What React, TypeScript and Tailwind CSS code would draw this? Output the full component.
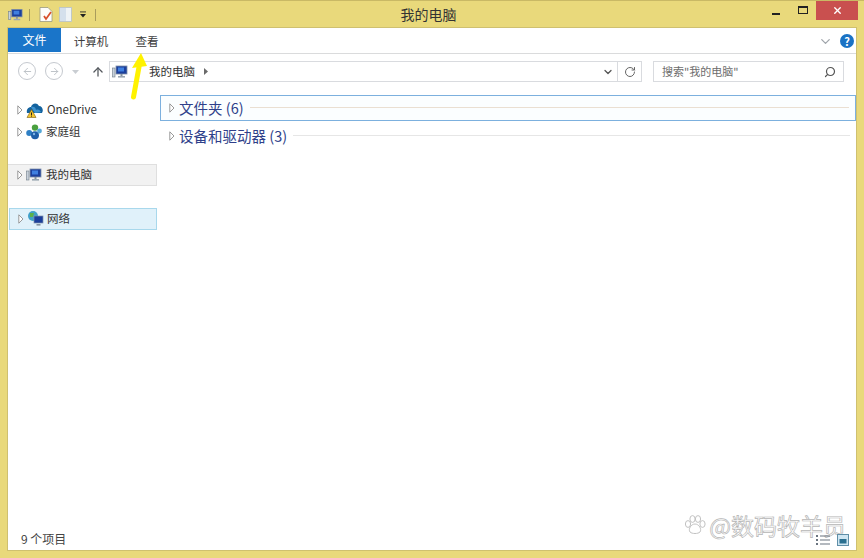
import { ChevronDown, Search, RotateCw, ArrowUp, ArrowLeft, ArrowRight, X } from 'lucide-react';

function PcIcon({ className }: { className?: string }) {
  return (
    <svg viewBox="0 0 16 14" className={className}>
      <rect x="4" y="1" width="11" height="8" fill="#1b3f9c" stroke="#7f8fa8" strokeWidth="0.8" />
      <rect x="6" y="2.5" width="6" height="4" fill="#3f7fe0" />
      <rect x="0.5" y="3" width="2.5" height="9" fill="#c9d2dc" stroke="#6f7c88" strokeWidth="0.6" />
      <rect x="6" y="11" width="7" height="1.6" fill="#9aa7b2" />
      <rect x="8.5" y="9" width="2" height="2" fill="#8492a0" />
    </svg>
  );
}

function Caret() {
  return (
    <svg viewBox="0 0 6 10" className="w-[6px] h-[10px] shrink-0">
      <path d="M0.8 0.8 L5 5 L0.8 9.2 Z" fill="white" stroke="#8e8e8e" strokeWidth="0.9" />
    </svg>
  );
}

function OneDriveIcon() {
  return (
    <svg viewBox="0 0 17 16" className="w-[17px] h-[16px] shrink-0">
      <path d="M1 11 C0 7 3 5 5 5 C6 1 11 0 13 4 C16 4 18 8 16 11 Z" fill="#14639f" />
      <path d="M5 5 C7 4 10 5 10 8 C12 7 14 8 15 10 L9 11 Z" fill="#3f93cf" />
      <path d="M1 15.5 L5.5 7.5 L10 15.5 Z" fill="#f4c52e" stroke="#7a5c10" strokeWidth="0.6" />
      <rect x="5" y="10.5" width="1" height="2.6" fill="#222" />
      <rect x="5" y="13.6" width="1" height="1" fill="#222" />
    </svg>
  );
}

function HomeGroupIcon() {
  return (
    <svg viewBox="0 0 16 16" className="w-[16px] h-[16px] shrink-0">
      <circle cx="3.2" cy="9" r="3" fill="#2f7fc4" />
      <circle cx="9" cy="3.6" r="3.2" fill="#4aa03f" />
      <circle cx="9" cy="11.2" r="4" fill="#1f5fa8" />
      <circle cx="13.5" cy="7" r="2.4" fill="#55a8d8" />
      <circle cx="8" cy="10" r="1.2" fill="#7fb4e4" />
    </svg>
  );
}

function NetworkIcon() {
  return (
    <svg viewBox="0 0 17 16" className="w-[17px] h-[16px] shrink-0">
      <circle cx="6" cy="5" r="5" fill="#3fa0c8" />
      <path d="M3 2 L7 2 L6 6 L3 6 Z" fill="#5bb04a" />
      <rect x="7" y="5" width="9" height="7" fill="#1b3f9c" stroke="#7f8fa8" strokeWidth="0.7" />
      <rect x="9.5" y="13" width="4" height="1.6" fill="#8492a0" />
    </svg>
  );
}

export default function App() {
  return (
    <div
      className="relative w-[864px] h-[558px] overflow-hidden flex flex-col bg-[#e9d97b] border-t border-[#c9b965] text-[#3c3c3c]"
      style={{ fontFamily: '"Noto Sans CJK SC", "Liberation Sans", sans-serif' }}
    >
      {/* Title bar */}
      <div className="h-[27px] shrink-0 flex items-start relative">
        <div className="flex items-center pl-[8px] pt-[6px] gap-[6px]">
          <PcIcon className="w-[15px] h-[14px]" />
          <div className="w-px h-[12px] bg-[#a99c5c]" />
          <svg viewBox="0 0 14 15" className="w-[14px] h-[15px] ml-[3px]">
            <path d="M1 0.5 H9 L13 4.5 V14.5 H1 Z" fill="#fdfdfb" stroke="#9a9a80" strokeWidth="0.8" />
            <path d="M5 9 L7 12 L12 5" fill="none" stroke="#d8502c" strokeWidth="1.8" />
          </svg>
          <svg viewBox="0 0 13 15" className="w-[13px] h-[15px]">
            <rect x="0.5" y="0.5" width="12" height="14" fill="#d4e0ec" stroke="#b9c4ca" strokeWidth="0.8" />
            <rect x="7" y="1" width="5" height="13" fill="#eef3f6" />
          </svg>
          <svg viewBox="0 0 7 7" className="w-[6px] h-[7px] ml-[2px]">
            <rect x="0" y="0" width="7" height="1" fill="#222" />
            <path d="M0 3 H7 L3.5 7 Z" fill="#222" />
          </svg>
          <div className="w-px h-[12px] bg-[#a99c5c] ml-[3px]" />
        </div>
        <div className="absolute left-0 w-[857px] top-[5px] text-center text-[14px] leading-[16px] text-[#333]">我的电脑</div>
        <div className="ml-auto flex items-start mr-[6px]">
          <div className="w-[26px] h-[18px] flex items-end justify-center pb-[4px]">
            <div className="w-[8px] h-[2px] bg-[#222]" />
          </div>
          <div className="w-[27px] h-[18px] flex items-center justify-center">
            <div className="w-[10px] h-[8px] border border-t-2 border-[#222]" />
          </div>
          <div className="w-[42px] h-[19px] bg-[#c9504f] flex items-center justify-center">
            <X size={11} strokeWidth={3} className="text-white" />
          </div>
        </div>
      </div>

      {/* Window body */}
      <div className="flex-1 mx-[8px] mb-[8px] bg-white flex flex-col min-h-0 shadow-[0_0_0_1px_#cfc070]">
        {/* Ribbon tabs */}
        <div className="h-[26px] shrink-0 flex items-start border-b border-[#dadbdc] text-[11.5px]">
          <div className="w-[53px] h-[24px] bg-[#1a75c9] text-white text-[12px] flex items-center justify-center">文件</div>
          <div className="w-[60px] flex items-center justify-center h-[26px] pt-[1px]">计算机</div>
          <div className="w-[24px] flex items-center justify-center h-[26px] ml-[14px] pt-[1px]">查看</div>
          <div className="ml-auto flex items-center gap-[7px] pr-[2px] h-[26px]">
            <ChevronDown size={15} strokeWidth={2} className="text-[#9fa4aa]" />
            <div className="w-[14px] h-[14px] rounded-full bg-[#1a72c4] text-white text-[11px] leading-[14px] font-bold text-center">?</div>
          </div>
        </div>

        {/* Address bar */}
        <div className="h-[39px] shrink-0 flex items-start pt-[7px]">
          <div className="w-[18px] h-[18px] mt-[1px] ml-[10px] rounded-full border border-[#c5c9cf] flex items-center justify-center">
            <ArrowLeft size={11} className="text-[#b9bec4]" />
          </div>
          <div className="w-[18px] h-[18px] mt-[1px] ml-[9px] rounded-full border border-[#c5c9cf] flex items-center justify-center">
            <ArrowRight size={11} className="text-[#b9bec4]" />
          </div>
          <svg viewBox="0 0 7 4" className="w-[7px] h-[4px] mt-[9px] ml-[9px]">
            <path d="M0 0 H7 L3.5 4 Z" fill="#c9cdd2" />
          </svg>
          <ArrowUp size={14} strokeWidth={2.2} className="mt-[4px] ml-[12px] text-[#55595e]" />
          <div className="ml-[4px] w-[533px] h-[21px] border border-[#d9dbdf] flex items-center">
            <PcIcon className="w-[16px] h-[14px] ml-[2px]" />
            <span className="ml-[21px] text-[11.5px] text-[#333]">我的电脑</span>
            <svg viewBox="0 0 4 7" className="w-[4px] h-[7px] ml-[9px]">
              <path d="M0 0 L4 3.5 L0 7 Z" fill="#6a6a6a" />
            </svg>
            <ChevronDown size={12} strokeWidth={2.6} className="ml-auto mr-[3px] text-[#555]" />
            <div className="w-[24px] h-full border-l border-[#d9dbdf] flex items-center justify-center">
              <RotateCw size={12} strokeWidth={2} className="text-[#666]" />
            </div>
          </div>
          <div className="ml-[11px] w-[191px] h-[21px] border border-[#d9dbdf] flex items-center pl-[8px] pr-[7px] text-[11px] text-[#6d6d6d]">
            <span>搜索"我的电脑"</span>
            <Search size={12} strokeWidth={2.4} className="ml-auto text-[#555] -scale-x-100" />
          </div>
        </div>

        {/* Content */}
        <div className="flex-1 flex min-h-0">
          {/* Nav pane */}
          <div className="w-[149px] shrink-0 pt-[6px] text-[11.5px] text-[#333]">
            <div className="h-[22px] flex items-center pl-[9px] gap-[3px]">
              <Caret />
              <OneDriveIcon />
              <span className="ml-[1px]">OneDrive</span>
            </div>
            <div className="h-[22px] flex items-center pl-[9px] gap-[3px]">
              <Caret />
              <HomeGroupIcon />
              <span className="ml-[1px]">家庭组</span>
            </div>
            <div className="mt-[21px] h-[22px] flex items-center pl-[9px] gap-[3px] bg-[#f2f2f2] border border-l-0 border-[#dfdfdf]">
              <Caret />
              <PcIcon className="w-[16px] h-[14px]" />
              <span className="ml-[1px]">我的电脑</span>
            </div>
            <div className="mt-[22px] h-[22px] ml-[1px] flex items-center pl-[8px] gap-[3px] bg-[#e0f1fa] border border-[#a8d8ec]">
              <Caret />
              <NetworkIcon />
              <span>网络</span>
            </div>
          </div>

          {/* Groups */}
          <div className="flex-1 min-w-0 pl-[3px] pt-[2px]">
            <div className="h-[26px] flex items-center pl-[8px] pr-[6px] pb-[1px] gap-[4px] border border-[#7cb0de] bg-[#fbfeff] text-[#2f3f8a] text-[14.5px]">
              <Caret />
              <span className="shrink-0">文件夹 (6)</span>
              <div className="flex-1 h-px bg-[#eadfd2] ml-[2px]" />
            </div>
            <div className="mt-[2px] h-[26px] flex items-center pl-[9px] pr-[6px] pb-[1px] gap-[4px] text-[#2f3f8a] text-[14.5px]">
              <Caret />
              <span className="shrink-0">设备和驱动器 (3)</span>
              <div className="flex-1 h-px bg-[#e6e6e6] ml-[2px]" />
            </div>
          </div>
        </div>

        {/* Status bar */}
        <div className="h-[22px] shrink-0 flex items-center pl-[13px] text-[12px] text-[#444]">
          9 个项目
        </div>
      </div>

      {/* Yellow annotation arrow */}
      <svg viewBox="0 0 20 52" className="absolute left-[130px] top-[50px] w-[20px] h-[52px]">
        <path d="M3.5 46 L9 16" stroke="#fff200" strokeWidth="5" strokeLinecap="round" fill="none" />
        <path d="M11 2 L17 15 L2 17 Z" fill="#fff200" />
      </svg>

      {/* Watermark */}
      <div
        className="absolute right-[18px] bottom-[20px] flex items-center gap-[3px] text-[23px] leading-[26px] text-white"
        style={{ WebkitTextStroke: '0.7px #b5b5b5' }}
      >
        <svg viewBox="0 0 22 20" className="w-[22px] h-[20px]">
          <g fill="none" stroke="#c2c2c2" strokeWidth="1">
            <ellipse cx="4" cy="9" rx="2.6" ry="3.4" />
            <ellipse cx="8.5" cy="4" rx="2.6" ry="3.4" />
            <ellipse cx="14" cy="4" rx="2.6" ry="3.4" />
            <ellipse cx="18.5" cy="9" rx="2.6" ry="3.4" />
            <path d="M11 9 C7 9 4 14 6 17 C8 19 14 19 16 17 C18 14 15 9 11 9 Z" />
          </g>
        </svg>
        <span>@数码牧羊员</span>
      </div>

      {/* View buttons over the watermark */}
      <div className="absolute right-[15px] bottom-[12px] flex items-center gap-[6px]">
        <svg viewBox="0 0 15 12" className="w-[15px] h-[12px]">
          <g fill="#6a7480">
            <rect x="0" y="1" width="2" height="2" />
            <rect x="0" y="5" width="2" height="2" />
            <rect x="0" y="9" width="2" height="2" />
            <rect x="4" y="1.5" width="10" height="1" />
            <rect x="4" y="5.5" width="10" height="1" />
            <rect x="4" y="9.5" width="10" height="1" />
          </g>
        </svg>
        <svg viewBox="0 0 12 12" className="w-[12px] h-[12px]">
          <rect x="0.5" y="0.5" width="11" height="11" fill="#cfe6f2" stroke="#5f8fa8" />
          <rect x="2.5" y="5" width="7" height="4.5" fill="#2a6f90" />
        </svg>
      </div>
    </div>
  );
}
